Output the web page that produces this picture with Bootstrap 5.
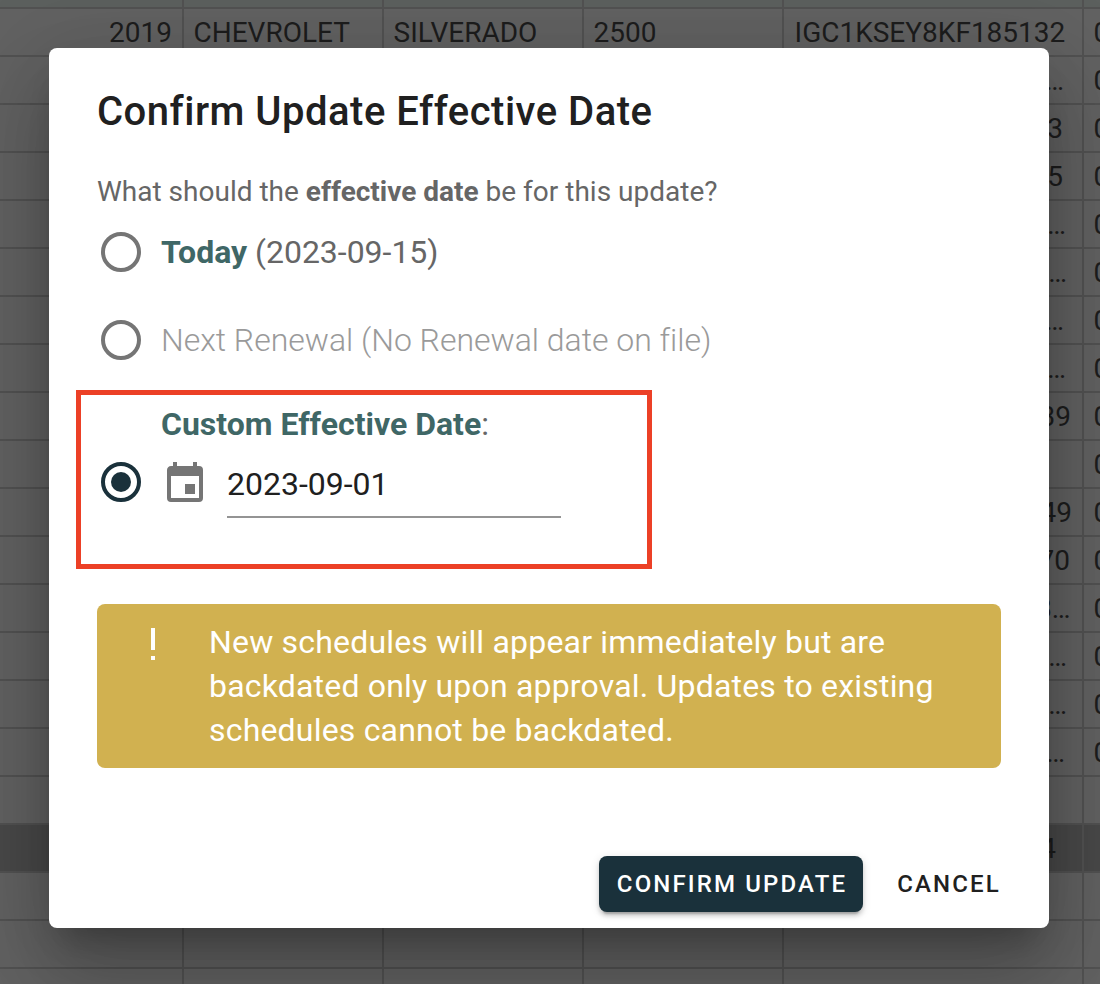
<!DOCTYPE html>
<html lang="en">
<head>
<meta charset="utf-8">
<meta name="viewport" content="width=device-width, initial-scale=1">
<title>Confirm Update Effective Date</title>
<link href="https://cdn.jsdelivr.net/npm/bootstrap@5.3.0/dist/css/bootstrap.min.css" rel="stylesheet">
<style>
  body { font-family: Roboto, "Liberation Sans", sans-serif; background: #626262; height: 984px; color: #202020; }
  .sheet-row { display: grid; grid-template-columns: 184px 200px 200px 200px 300px 1fr; height: 48px; }
  .sheet-row > div { border-right: 2px solid #525252; border-bottom: 2px solid #525252; padding: 2px 10px 0 9.5px; font-size: 28px; line-height: 44px; white-space: nowrap; overflow: hidden; color: #1d1d1d; }
  .sheet-row > div:last-child { border-right: 0; overflow: visible; }
  .sheet-head { height: 9px; background: #5c605e; }
  .sheet-total { background: #494949; }
  .dialog-box { width: 1000px; height: 880px; margin: 48px 0 0 49px; padding: 0 48px; border-radius: 8px;
    box-shadow: 0 22px 30px -14px rgba(0,0,0,.24), 0 48px 76px 6px rgba(0,0,0,.17), 0 18px 92px 16px rgba(0,0,0,.12); }
  .dialog-title { font-size: 40px; font-weight: 500; line-height: 64px; letter-spacing: .5px; padding-top: 32px; }
  .question { font-size: 28px; line-height: 44px; color: #666; margin-top: 26px; }
  .choice { height: 48px; font-size: 32px; line-height: 48px; color: #666; padding-left: 4px; letter-spacing: -.02px; }
  .choice svg, .custom-date svg { flex: none; }
  .choice-today { margin-top: 14px; }
  .choice-renewal { margin-top: 40px; }
  .choice-renewal span { color: #9a9a9a; }
  .accent { color: #3f6766; font-weight: 700; }
  .marked { border: 5px solid #ec4026; width: 576px; height: 179px; margin: 26px 0 0 -21px; padding: 5px 0 0 20px; }
  .custom-label { font-size: 32px; line-height: 48px; color: #666; padding-left: 60px; }
  .radio-on { margin-top: 14px; }
  .calendar { margin: 12px 0 0 20px; }
  .date-field { width: 334px; height: 70px; font-size: 32px; line-height: 60px; padding-top: 6px; border-bottom: 2px solid #949494; margin-left: 18px; }
  .notice { height: 164px; background: #d1b150; border-radius: 8px; margin-top: 35px; padding: 16px 0; color: #fff; font-size: 32px; line-height: 44px; letter-spacing: .19px; }
  .notice svg { margin: 0 32px; flex: none; }
  .dialog-actions { margin-right: -17px; }
  .dlg-btn { height: 56px; font-size: 24px; font-weight: 500; letter-spacing: 2.14px; line-height: 56px; text-align: center; border: 0; padding: 0; border-radius: 8px; background: none; white-space: nowrap; color: #202020; }
  .dlg-confirm { width: 264px; padding-left: 2px; background: #1a313b; color: #fff; box-shadow: 0 6px 2px -4px rgba(0,0,0,.2), 0 4px 4px 0 rgba(0,0,0,.14), 0 2px 10px 0 rgba(0,0,0,.12); }
  .dlg-cancel { width: 139px; padding-left: 1px; }
</style>
</head>
<body class="overflow-hidden position-relative">
<div id="sheet"></div>

<div class="position-absolute top-0 start-0">
  <div class="dialog-box bg-white d-flex flex-column">
    <h1 class="dialog-title mb-0">Confirm Update Effective Date</h1>
    <p class="question mb-0">What should the <b>effective date</b> be for this update?</p>

    <div class="choice choice-today d-flex align-items-center">
      <svg width="40" height="40"><circle cx="20" cy="20" r="18" fill="none" stroke="#757575" stroke-width="4"/></svg>
      <span class="ms-3 ps-1"><span class="accent">Today</span> (2023-09-15)</span>
    </div>
    <div class="choice choice-renewal d-flex align-items-center">
      <svg width="40" height="40"><circle cx="20" cy="20" r="18" fill="none" stroke="#757575" stroke-width="4"/></svg>
      <span class="ms-3 ps-1 fw-light">Next Renewal (No Renewal date on file)</span>
    </div>

    <div class="marked">
      <div class="custom-label"><span class="accent">Custom Effective Date</span>:</div>
      <div class="custom-date d-flex">
        <svg class="radio-on" width="40" height="40"><circle cx="20" cy="20" r="18" fill="none" stroke="#1a313b" stroke-width="4"/><circle cx="20" cy="20" r="10" fill="#1a313b"/></svg>
        <svg class="calendar" width="48" height="48" viewBox="0 0 24 24"><path fill="#757575" d="M19 19H5V8h14m-3-7v2H8V1H6v2H5c-1.11 0-2 .89-2 2v14a2 2 0 0 0 2 2h14a2 2 0 0 0 2-2V5a2 2 0 0 0-2-2h-1V1m-1 11h-5v5h5v-5z"/></svg>
        <div class="date-field">2023-09-01</div>
      </div>
    </div>

    <div class="notice d-flex">
      <svg width="48" height="48" viewBox="0 0 24 24"><path fill="#fff" d="M11 4h2v11h-2zm0 14h2v2h-2z"/></svg>
      <div>New schedules will appear immediately but are<br>backdated only upon approval. Updates to existing<br>schedules cannot be backdated.</div>
    </div>

    <div class="dialog-actions d-flex justify-content-end mt-auto mb-3">
      <button class="dlg-btn dlg-confirm">CONFIRM UPDATE</button>
      <button class="dlg-btn dlg-cancel ms-3">CANCEL</button>
    </div>
  </div>
</div>

<script>
  // visible tail of each VIN and its distance from the right edge of the cell
  const rows = [
    ["IGC1KSEY8KF185132", 16.7], ["…", 18], ["3", 19], ["5", 19], ["…", 16], ["…", 15], ["…", 18], ["…", 16],
    ["39", 11], ["", 0], ["49", 10], ["70", 12], ["8…", 11.5], ["…", 15], ["…", 15], ["…", 17],
    ["", 0], ["4", 26], ["", 0], ["", 0], ["", 0]
  ];
  const cell = (t = "", cls = "") => `<div class="${cls}">${t}</div>`;
  document.getElementById("sheet").innerHTML =
    `<div class="sheet-row sheet-head">${cell().repeat(6)}</div>` +
    rows.map(([vin, pad], i) => `<div class="sheet-row ${i === 17 ? "sheet-total" : ""}">` +
      (i ? cell().repeat(4) : cell("2019", "text-end") + cell("CHEVROLET") + cell("SILVERADO") + cell("2500")) +
      `<div class="text-end" style="padding-right:${pad}px">${vin}</div>` +
      cell(i < 16 ? "0" : "") + `</div>`).join("");
</script>
<script src="https://cdn.jsdelivr.net/npm/bootstrap@5.3.0/dist/js/bootstrap.bundle.min.js"></script>
</body>
</html>
